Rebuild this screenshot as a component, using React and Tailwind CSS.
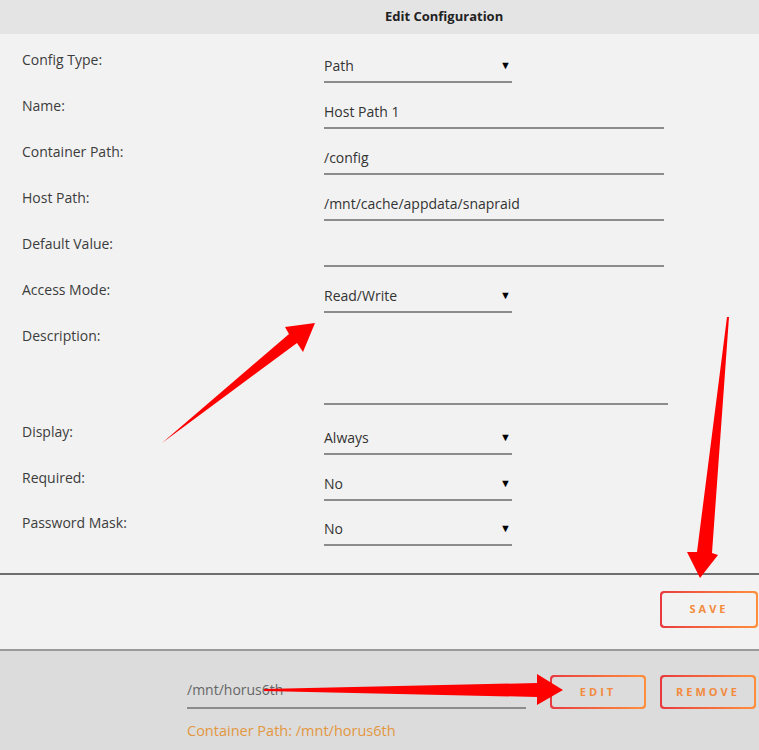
import React from 'react';

const font = { fontFamily: '"Open Sans", "Liberation Sans", sans-serif' };

const rows = [
    { label: 'Config Type:', value: 'Path', kind: 'select', h: 'h-[46px]' },
    { label: 'Name:', value: 'Host Path 1', kind: 'text', h: 'h-[46px]' },
    { label: 'Container Path:', value: '/config', kind: 'text', h: 'h-[46px]' },
    { label: 'Host Path:', value: '/mnt/cache/appdata/snapraid', kind: 'text', h: 'h-[46px]' },
    { label: 'Default Value:', value: '', kind: 'text', h: 'h-[46px]' },
    { label: 'Access Mode:', value: 'Read/Write', kind: 'select', h: 'h-[46px]' },
    { label: 'Description:', value: '', kind: 'area', h: 'h-[96px]' },
    { label: 'Display:', value: 'Always', kind: 'select', h: 'h-[46px]' },
    { label: 'Required:', value: 'No', kind: 'select', h: 'h-[45px]' },
    { label: 'Password Mask:', value: 'No', kind: 'select', h: 'h-[45px]' },
];

function Field({ row }) {
    if (row.kind === 'select') {
        return (
            <div className="mt-[16px] w-[188px] h-[30px] border-b-2 border-[#8c8c8c] flex items-center justify-between pb-[4px] pr-[1px]">
                <span>{row.value}</span>
                <span className="text-[11px] text-black">▼</span>
            </div>
        );
    }
    if (row.kind === 'area') {
        return <div className="mt-[16px] w-[344px] h-[76px] border-b-2 border-[#8c8c8c]" />;
    }
    return (
        <div className="mt-[16px] w-[340px] h-[30px] border-b-2 border-[#8c8c8c] flex items-center pb-[4px]">
            {row.value}
        </div>
    );
}

function OutlineButton({ label, className }) {
    return (
        <div className={`p-[2px] rounded-[4px] bg-linear-to-r from-[#e8383f] to-[#ff8f3a] ${className}`}>
            <div className="w-full h-full rounded-[3px] bg-inherit flex items-center justify-center">
                <span className="text-[11px] font-bold tracking-[3px] text-[#f38a3c]">{label}</span>
            </div>
        </div>
    );
}

export default function App() {
    return (
        <div className="relative w-[759px] h-[750px] overflow-hidden bg-[#dcdcdc] text-[14px] text-[#333]" style={font}>

            <div className="h-[34px] bg-[#e4e4e4] flex items-center pl-[385px]">
                <span className="text-[13px] font-bold text-[#222]">Edit Configuration</span>
            </div>

            <div className="bg-[#f2f2f2] pt-[3px] pb-[28px]">
                {rows.map((row) => (
                    <div key={row.label} className={`flex items-start ${row.h}`}>
                        <div className="w-[324px] pl-[22px] pt-[13px] leading-5 text-[#3c3c3c]">{row.label}</div>
                        <Field row={row} />
                    </div>
                ))}
            </div>

            <div className="h-[2px] bg-[#6e6e6e]" />

            <div className="bg-[#f2f2f2] h-[74px] flex justify-end pt-[16px] pr-[1px]">
                <OutlineButton label="SAVE" className="w-[98px] h-[37px] bg-[#f2f2f2]" />
            </div>

            <div className="h-[2px] bg-[#999]" />

            <div className="pt-[24px] pl-[187px]">
                <div className="flex items-center">
                    <div className="w-[339px] h-[33px] border-b-2 border-[#8c8c8c] flex items-center pb-[3px] text-[#666]">
                        /mnt/horus6th
                    </div>
                    <OutlineButton label="EDIT" className="ml-[24px] w-[96px] h-[34px] bg-[#dcdcdc]" />
                    <OutlineButton label="REMOVE" className="ml-[14px] w-[96px] h-[34px] bg-[#dcdcdc]" />
                </div>
                <div className="mt-[12px] leading-5 text-[14.5px] text-[#e3973f]">Container Path: /mnt/horus6th</div>
            </div>

            {/* annotation arrows */}
            <svg className="absolute top-0 left-0 pointer-events-none" width="759" height="750" viewBox="0 0 759 750">
                <polygon fill="#ff0000" points="162,443 289,334 285,327 315,323 303,352 297,343" />
                <polygon fill="#ff0000" points="727,317 729,317 712,553 718,555 700,578 687,552 697,552" />
                <polygon fill="#ff0000" points="264,689 537,683 537,674 563,690 537,705 537,697 264,691" />
            </svg>

        </div>
    );
}
